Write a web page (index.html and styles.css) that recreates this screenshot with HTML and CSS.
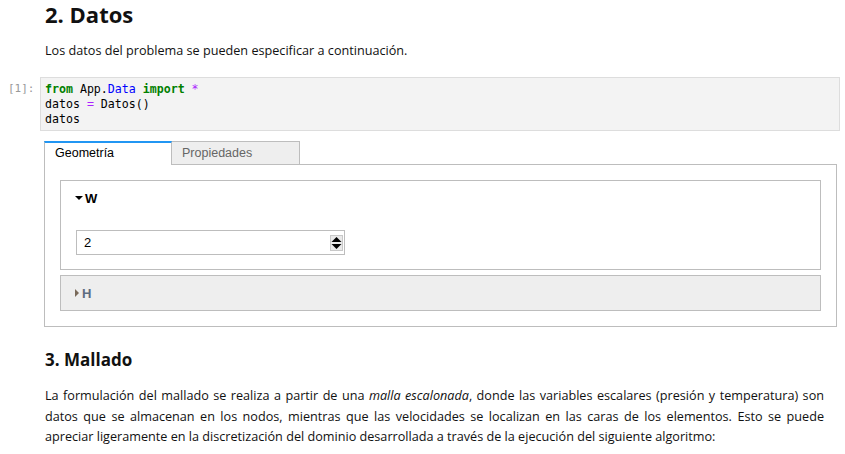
FILE: index.html
```html
<!DOCTYPE html>
<html lang="es">
<head>
<meta charset="utf-8">
<link rel="stylesheet" href="styles.css">
</head>
<body>
<div class="cell md">
  <h2 class="h2">2. Datos</h2>
  <p class="para">Los datos del problema se pueden especificar a continuación.</p>
</div>
<div class="cell code-cell">
  <div class="prompt">[1]:</div>
  <div class="code"><div class="line"><span class="kw">from</span> App.<span class="mod">Data</span> <span class="kw">import</span> <span class="op">*</span></div><div class="line">datos <span class="op">=</span> Datos()</div><div class="line">datos</div></div>
</div>
<div class="output">
  <div class="tabs">
    <div class="tab active">Geometría</div>
    <div class="tab">Propiedades</div>
  </div>
  <div class="panel">
    <div class="acc open">
      <div class="acc-title"><span class="caret-down"></span>W</div>
      <div class="acc-body">
        <div class="num-input"><span class="val">2</span><span class="spin"><svg width="13" height="16" viewBox="0 0 13 16"><rect x="0.5" y="0.5" width="12" height="15" fill="#e9e9e9" stroke="#c8c8c8"/><path d="M1.5 7 L6.5 2 L11.5 7 Z" fill="#000"/><path d="M1.5 9 L11.5 9 L6.5 14 Z" fill="#000"/></svg></span></div>
      </div>
    </div>
    <div class="acc closed">
      <div class="acc-title"><span class="caret-right"></span>H</div>
    </div>
  </div>
</div>
<div class="cell md">
  <h3 class="h3">3. Mallado</h3>
  <p class="para justify">La formulación del mallado se realiza a partir de una <em>malla escalonada</em>, donde las variables escalares (presión y temperatura) son datos que se almacenan en los nodos, mientras que las velocidades se localizan en las caras de los elementos. Esto se puede apreciar ligeramente en la discretización del dominio desarrollada a través de la ejecución del siguiente algoritmo:</p>
</div>
</body>
</html>
```
FILE: styles.css
```css
html, body {
  margin: 0;
  padding: 0;
  background: #fff;
}
body {
  font-family: "Open Sans", "Noto Sans", sans-serif;
  font-size: 13px;
  color: #000;
  width: 845px;
  height: 454px;
  overflow: hidden;
}
.cell.md {
  padding-left: 45px;
  padding-right: 21px;
}
.h2 {
  margin: 0;
  font-size: 22px;
  line-height: 28px;
  font-weight: 700;
  color: #111;
}
.para {
  margin: 12px 0 0 0;
  font-size: 12.65px;
  line-height: 20px;
  color: #111;
}
.code-cell {
  display: flex;
  margin-top: 17px;
  padding-right: 5px;
}
.prompt {
  width: 40px;
  box-sizing: border-box;
  padding-left: 8px;
  padding-top: 4px;
  font-family: "DejaVu Sans Mono", monospace;
  font-size: 11px;
  color: #999;
  line-height: 15px;
}
.code {
  flex: 1;
  background: #f3f3f3;
  border: 1px solid #ddd;
  padding: 4px 4px 3px 4px;
  font-family: "DejaVu Sans Mono", monospace;
  font-size: 11.6px;
  color: #000;
}
.line {
  height: 15px;
  line-height: 15px;
  white-space: pre;
}
.kw { color: #008000; font-weight: 700; }
.mod { color: #0000ff; }
.op { color: #aa22ff; }
.output {
  margin: 10px 8px 0 44px;
  font-family: "Liberation Sans", Arial, sans-serif;
  font-size: 12.5px;
}
.tabs {
  display: flex;
}
.tab {
  width: 128px;
  box-sizing: border-box;
  height: 23px;
  line-height: 22px;
  padding-left: 10px;
  border: 1px solid #bdbdbd;
  border-bottom: none;
  background: #eeeeee;
  color: #666;
}
.tab + .tab { border-left: none; }
.tab.active {
  background: #fff;
  color: #000;
  border-top: 2px solid #2196f3;
  line-height: 21px;
  height: 24px;
  margin-bottom: -1px;
  position: relative;
  z-index: 1;
}
.panel {
  width: 793px;
  box-sizing: border-box;
  border: 1px solid #bdbdbd;
  padding: 15px 15px 15px 15px;
  display: flex;
  flex-direction: column;
  gap: 5px;
}
.acc {
  border: 1px solid #bdbdbd;
}
.acc-title {
  display: flex;
  align-items: center;
  font-weight: 700;
  font-size: 13px;
  padding-left: 14px;
  height: 34px;
  color: #000;
}
.acc.closed {
  background: #eeeeee;
}
.acc.closed .acc-title {
  color: #5d6c80;
}
.caret-down {
  width: 0; height: 0;
  border-left: 4px solid transparent;
  border-right: 4px solid transparent;
  border-top: 4px solid #000;
  margin-right: 2px;
}
.caret-right {
  width: 0; height: 0;
  border-top: 4px solid transparent;
  border-bottom: 4px solid transparent;
  border-left: 4px solid #7a6a5a;
  margin-right: 3px;
}
.acc-body {
  padding: 15px 15px 14px 15px;
}
.num-input {
  width: 269px;
  height: 25px;
  box-sizing: border-box;
  border: 1px solid #bdbdbd;
  display: flex;
  align-items: center;
  justify-content: space-between;
  padding: 0 1px 0 7px;
  font-size: 13px;
}
.spin { display: flex; }
.h3 {
  margin: 21px 0 0 0;
  font-size: 17px;
  line-height: 24px;
  font-weight: 700;
  color: #111;
}
.justify {
  text-align: justify;
  margin-top: 13px;
  line-height: 20.5px;
}
```
